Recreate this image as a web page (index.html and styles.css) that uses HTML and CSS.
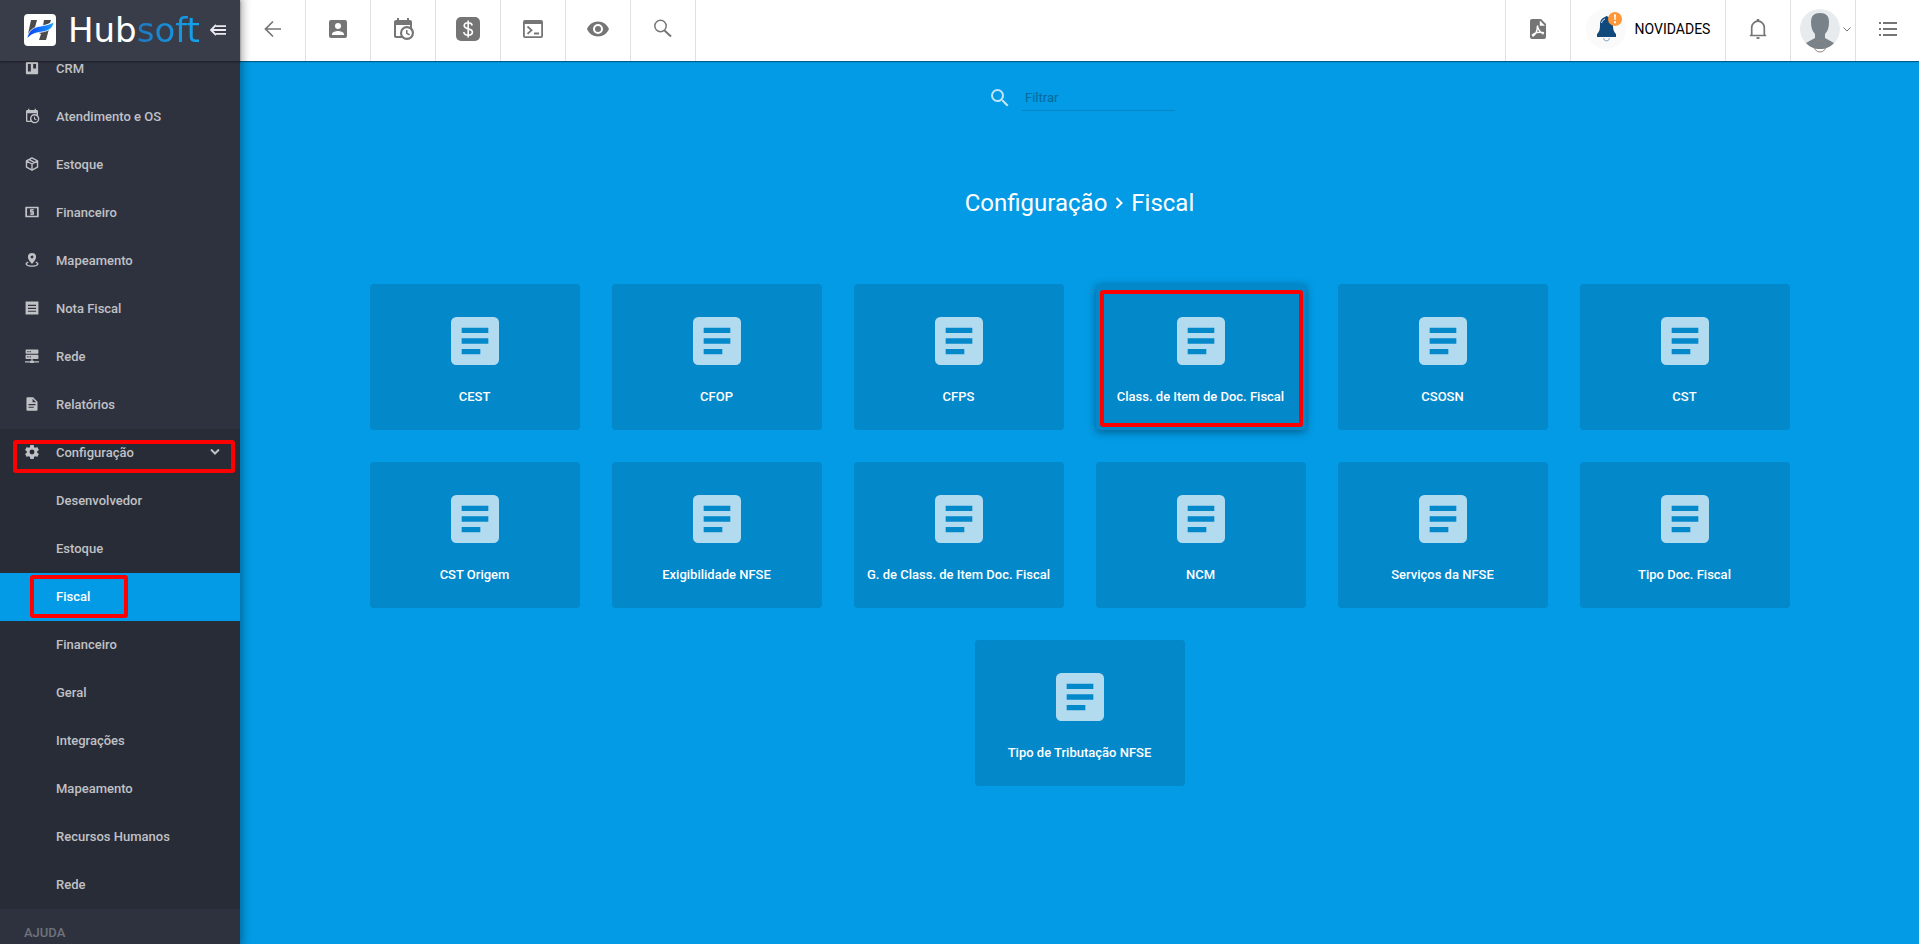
FILE: index.html
```html
<!DOCTYPE html>
<html lang="pt-BR">
<head>
<meta charset="utf-8">
<title>Hubsoft - Configuração Fiscal</title>
<link rel="stylesheet" href="styles.css">
</head>
<body>
<svg class="sprite" aria-hidden="true">
  <symbol id="doc" viewBox="0 0 24 24"><path d="M14 17H7v-2h7m3-2H7v-2h10m0-2H7V7h10m2-4H5a2 2 0 0 0-2 2v14a2 2 0 0 0 2 2h14a2 2 0 0 0 2-2V5a2 2 0 0 0-2-2z"/></symbol>
  <symbol id="calendar" viewBox="0 0 24 24"><path d="M15,13H16.5V15.82L18.94,17.23L18.19,18.53L15,16.69V13M19,8H5V19H9.67C9.24,18.09 9,17.07 9,16A7,7 0 0,1 16,9C17.07,9 18.09,9.24 19,9.67V8M5,21C3.89,21 3,20.1 3,19V5C3,3.89 3.89,3 5,3H6V1H8V3H16V1H18V3H19A2,2 0 0,1 21,5V11.1C22.24,12.36 23,14.09 23,16A7,7 0 0,1 16,23C14.09,23 12.36,22.24 11.1,21H5M16,11.15A4.85,4.85 0 0,0 11.15,16C11.15,18.68 13.32,20.85 16,20.85A4.85,4.85 0 0,0 20.85,16C20.85,13.32 18.68,11.15 16,11.15Z"/></symbol>
  <symbol id="magnify" viewBox="0 0 24 24"><path d="M9.5,3A6.5,6.5 0 0,1 16,9.5C16,11.11 15.41,12.59 14.44,13.73L14.71,14H15.5L20.5,19L19,20.5L14,15.5V14.71L13.73,14.44C12.59,15.41 11.11,16 9.5,16A6.5,6.5 0 0,1 3,9.5A6.5,6.5 0 0,1 9.5,3M9.5,5C7,5 5,7 5,9.5C5,12 7,14 9.5,14C12,14 14,12 14,9.5C14,7 12,5 9.5,5Z"/></symbol>
</svg>
<div class="app">
  <aside class="sidebar">
    <div class="brand">
      <svg class="brand-mark" viewBox="0 0 32 32" aria-hidden="true">
        <defs><linearGradient id="wing" x1="0" x2="1"><stop offset="0" stop-color="#0a3df5"/><stop offset="1" stop-color="#1aa0ff"/></linearGradient></defs>
        <rect width="32" height="32" rx="4" fill="#fff"/>
        <path d="M7 6h6l-3 11-6 3zM20 6h7l-1 3-7 3zM15 19l10-4-3 11h-7l2-6z" fill="#4b4b4b"/>
        <path d="M3 25C4 17 9 13 17 12C23 11 26 10 30 8C29 14 25 17 18 18C11 19 7 20 3 25z" fill="url(#wing)" stroke="#fff" stroke-width=".8"/>
      </svg>
      <span class="brand-name">Hub<span class="brand-accent">soft</span></span>
      <button class="fold" aria-label="Recolher menu"><svg viewBox="0 0 16 12" fill="none" stroke="currentColor" stroke-width="1.8"><path d="M6 1L1 6l5 5M1 6h15M6 2.200h10M6 9.800h10"/></svg></button>
    </div>
    <nav class="menu">
      <a class="item" href="#"><svg class="ico" viewBox="0 0 24 24"><path d="M3 1.500h18q1.500 0 1.500 1.500v18q0 1.500-1.500 1.500H3q-1.500 0-1.500-1.500V3q0-1.500 1.500-1.500zM5 5v13h5V5zM14 5v8h5V5z" fill-rule="evenodd"/></svg><span>CRM</span></a>
      <a class="item" href="#"><svg class="ico wide"><use href="#calendar"/></svg><span>Atendimento e OS</span></a>
      <a class="item" href="#"><svg class="ico" viewBox="0 0 24 24" fill="none" stroke="currentColor" stroke-width="2.400" stroke-linejoin="round"><path d="M12 1.500l9.500 5.200v10.600L12 22.500l-9.500-5.200V6.700zM3 7l9 5 9-5M12 12v10M7.500 4.500l9 5"/></svg><span>Estoque</span></a>
      <a class="item" href="#"><svg class="ico" viewBox="0 0 24 24"><path d="M1.500 3h21q1 0 1 1v16q0 1-1 1h-21q-1 0-1-1V4q0-1 1-1zM3.500 5.500v13h17v-13z" fill-rule="evenodd"/><path d="M15.500 8.200h-6v3.600h5v3.800h-6M12 6.500v11" fill="none" stroke="currentColor" stroke-width="2"/></svg><span>Financeiro</span></a>
      <a class="item" href="#"><svg class="ico" viewBox="0 0 24 24"><path d="M12 0a7 7 0 0 0-7 7c0 5 7 12 7 12s7-7 7-12a7 7 0 0 0-7-7zM12 4.500a2.500 2.500 0 1 1 0 5 2.500 2.500 0 0 1 0-5z" fill-rule="evenodd"/><path d="M5.500 15.500C-1 18 2 22.500 12 22.500s13-4.500 6.500-7" fill="none" stroke="currentColor" stroke-width="2.400"/></svg><span>Mapeamento</span></a>
      <a class="item" href="#"><svg class="ico" viewBox="0 0 24 24"><path d="M1 1h22v22H1zM5 6.500v2h14v-2zM5 11.500v2h14v-2zM5 16.500v2h14v-2z" fill-rule="evenodd"/></svg><span>Nota Fiscal</span></a>
      <a class="item" href="#"><svg class="ico" viewBox="0 0 24 24"><path d="M2 1h20q1 0 1 1v5q0 1-1 1H2q-1 0-1-1V2q0-1 1-1zM4 3.500v2h2v-2zM8 3.500v2h2v-2zM2 10h20q1 0 1 1v5q0 1-1 1H2q-1 0-1-1v-5q0-1 1-1zM4 12.500v2h2v-2zM8 12.500v2h2v-2zM11 17h2v3h2v1h9v2h-9v1H9v-1H0v-2h9v-1h2z" fill-rule="evenodd"/></svg><span>Rede</span></a>
      <a class="item" href="#"><svg class="ico" viewBox="0 0 24 24"><path d="M4 .5h10l7.500 7.500v14q0 1.500-1.500 1.500H4q-1.500 0-1.500-1.500V2Q2.500.5 4 .5zM13 3v6h6zM6 12v2h12v-2zM6 16.500v2h9v-2z" fill-rule="evenodd"/></svg><span>Relatórios</span></a>
      <div class="group">
        <a class="item parent" href="#"><svg class="ico" viewBox="2 2 20 20"><path d="M12,15.5A3.5,3.5 0 0,1 8.5,12A3.5,3.5 0 0,1 12,8.5A3.5,3.5 0 0,1 15.5,12A3.5,3.5 0 0,1 12,15.5M19.43,12.97C19.47,12.65 19.5,12.33 19.5,12C19.5,11.67 19.47,11.34 19.43,11L21.54,9.37C21.73,9.22 21.78,8.95 21.66,8.73L19.66,5.27C19.54,5.05 19.27,4.96 19.05,5.05L16.56,6.05C16.04,5.66 15.5,5.32 14.87,5.07L14.5,2.42C14.46,2.18 14.25,2 14,2H10C9.75,2 9.54,2.18 9.5,2.42L9.13,5.07C8.5,5.32 7.96,5.66 7.44,6.05L4.95,5.05C4.73,4.96 4.46,5.05 4.34,5.27L2.34,8.73C2.21,8.95 2.27,9.22 2.46,9.37L4.57,11C4.53,11.34 4.5,11.67 4.5,12C4.5,12.33 4.53,12.65 4.57,12.97L2.46,14.63C2.27,14.78 2.21,15.05 2.34,15.27L4.34,18.73C4.46,18.95 4.73,19.03 4.95,18.95L7.44,17.94C7.96,18.34 8.5,18.68 9.13,18.93L9.5,21.58C9.54,21.82 9.75,22 10,22H14C14.25,22 14.46,21.82 14.5,21.58L14.87,18.93C15.5,18.67 16.04,18.34 16.56,17.94L19.05,18.95C19.27,19.03 19.54,18.95 19.66,18.73L21.66,15.27C21.78,15.05 21.73,14.78 21.54,14.63L19.43,12.97Z"/></svg><span>Configuração</span><svg class="caret" viewBox="0 0 10 6" fill="none" stroke="currentColor" stroke-width="2"><path d="M1 .5l4 4 4-4"/></svg></a>
        <a class="item sub" href="#">Desenvolvedor</a>
        <a class="item sub" href="#">Estoque</a>
        <a class="item sub active" href="#" aria-current="page">Fiscal</a>
        <a class="item sub" href="#">Financeiro</a>
        <a class="item sub" href="#">Geral</a>
        <a class="item sub" href="#">Integrações</a>
        <a class="item sub" href="#">Mapeamento</a>
        <a class="item sub" href="#">Recursos Humanos</a>
        <a class="item sub" href="#">Rede</a>
      </div>
      <div class="heading">AJUDA</div>
    </nav>
  </aside>
  <div class="page">
    <header class="toolbar">
      <button class="tool" aria-label="Voltar"><svg viewBox="0 0 24 24" fill="none" stroke="currentColor" stroke-width="1.700"><path d="M20 12H5M12 4.500L4.500 12l7.500 7.500"/></svg></button>
      <button class="tool" aria-label="Clientes"><svg viewBox="0 0 24 24"><path d="M6,17C6,15 10,13.9 12,13.9C14,13.9 18,15 18,17V18H6M15,9A3,3 0 0,1 12,12A3,3 0 0,1 9,9A3,3 0 0,1 12,6A3,3 0 0,1 15,9M3,5V19A2,2 0 0,0 5,21H19A2,2 0 0,0 21,19V5A2,2 0 0,0 19,3H5C3.89,3 3,3.9 3,5Z"/></svg></button>
      <button class="tool" aria-label="Agenda"><svg><use href="#calendar"/></svg></button>
      <button class="tool" aria-label="Financeiro"><svg viewBox="0 0 24 24"><rect width="24" height="24" rx="5"/><path d="M16.200 8.500C15.800 6.800 14.300 5.800 12.200 5.800c-2.300 0-4 1.100-4 3 0 4 8.200 2.100 8.200 6.200 0 2-1.700 3.200-4.200 3.200-2.400 0-4.100-1.100-4.400-3.200M12.200 3.500v17" fill="none" stroke="#fff" stroke-width="1.600"/></svg></button>
      <button class="tool" aria-label="Terminal"><svg viewBox="0 0 24 24"><path d="M4 3h16a2 2 0 0 1 2 2v14a2 2 0 0 1-2 2H4a2 2 0 0 1-2-2V5a2 2 0 0 1 2-2zM3.800 7v12.200h16.400V7z" fill-rule="evenodd"/><path d="M6.500 9.500l4 3.700-4 3.700" fill="none" stroke="currentColor" stroke-width="1.800"/><path d="M13 15.500h5v2h-5z"/></svg></button>
      <button class="tool" aria-label="Visualizar"><svg viewBox="0 0 24 24"><path d="M12,9A3,3 0 0,0 9,12A3,3 0 0,0 12,15A3,3 0 0,0 15,12A3,3 0 0,0 12,9M12,17A5,5 0 0,1 7,12A5,5 0 0,1 12,7A5,5 0 0,1 17,12A5,5 0 0,1 12,17M12,4.500C7,4.500 2.730,7.610 1,12C2.730,16.390 7,19.500 12,19.500C17,19.500 21.270,16.390 23,12C21.270,7.610 17,4.500 12,4.500Z"/></svg></button>
      <button class="tool" aria-label="Buscar"><svg viewBox="0 0 24 24" fill="none" stroke="currentColor"><circle cx="9.500" cy="9" r="5.700" stroke-width="1.500"/><path d="M13.500 13.500l6.500 6" stroke-width="2"/></svg></button>
      <div class="spacer"></div>
      <button class="tool end" aria-label="PDF"><svg viewBox="0 0 24 24"><path d="M6 2h9l5 5v13a2 2 0 0 1-2 2H6a2 2 0 0 1-2-2V4q0-2 2-2z"/><path d="M13.800 3.500L19 8.700h-5.200z" fill="#fff"/><path d="M11.500 8.500C11.500 13 9.500 17.500 6.500 19.500M6 18.500c2.500-3 7-4 12-2.800M11.500 9c.5 3.500 2.500 6 6 8" fill="none" stroke="#fff" stroke-width="1.500"/></svg></button>
      <button class="tool end news"><svg class="news-bell" viewBox="0 0 40 40" aria-hidden="true"><circle cx="20" cy="20" r="20" fill="#fafafa"/><path d="M19 8q2-2 3 0c4 1 5 4 5 8 0 5 1 7 3 9v3H11v-3c2-2 3-4 3-9 0-5 2-7 5-8z" fill="#104a7d"/><path d="M15.500 14q.5-3 3.500-4" fill="none" stroke="#dceaf5"/><path d="M17.500 29q.5 3 3 3t3-3" fill="none" stroke="#7ea3c5"/><circle cx="29" cy="10" r="7" fill="#ff9736"/><path d="M28 5.500h2l-.4 5.500h-1.200zM28 12.300h2v2h-2z" fill="#fff"/></svg><span>NOVIDADES</span></button>
      <button class="tool end" aria-label="Notificações"><svg viewBox="0 0 24 24" fill="none" stroke="currentColor" stroke-width="1.700"><path d="M3.800 18.500h16.400M5.700 18V10.500a6.300 6.300 0 0 1 12.600 0V18"/><path d="M12 2v3" stroke-width="2.500"/><path d="M10.500 21h3" stroke-width="1.800"/></svg></button>
      <button class="tool end user" aria-label="Usuário"><svg class="avatar" viewBox="0 0 40 40"><circle cx="20" cy="20" r="20" fill="#e8ebee"/><path d="M20 4c6 0 9 3 9 9 0 5-1 9-4 12v4c3 2 6 3 9 5-4 4-8 6-14 6s-10-2-14-6c3-2 6-3 9-5v-4c-3-3-4-7-4-12 0-6 3-9 9-9z" fill="#7a8289"/><circle cx="20" cy="37" r="6" fill="none" stroke="#8b8581"/></svg><svg class="arrow" viewBox="0 0 8 5" fill="none" stroke="currentColor"><path d="M.5.500L4 4 7.500.5"/></svg></button>
      <button class="tool end" aria-label="Menu rápido"><svg viewBox="0 0 24 24"><path d="M7 5h14v2H7zM7 11h14v2H7zM7 17h14v2H7zM3 5h2v2H3zM3 11h2v2H3zM3 17h2v2H3z"/></svg></button>
    </header>
    <main class="content">
      <div class="filter">
        <label for="filtrar" aria-label="Filtrar"><svg viewBox="0 0 24 24"><use href="#magnify"/></svg></label>
        <input id="filtrar" type="text" placeholder="Filtrar">
      </div>
      <h1 class="title">Configuração <svg viewBox="0 0 8 12" fill="none" stroke="currentColor" stroke-width="2"><path d="M1.500 1L6.500 6l-5 5"/></svg> Fiscal</h1>
      <div class="cards">
        <a class="card" href="#"><svg><use href="#doc"/></svg>CEST</a>
        <a class="card" href="#"><svg><use href="#doc"/></svg>CFOP</a>
        <a class="card" href="#"><svg><use href="#doc"/></svg>CFPS</a>
        <a class="card marked" href="#"><svg><use href="#doc"/></svg>Class. de Item de Doc. Fiscal</a>
        <a class="card" href="#"><svg><use href="#doc"/></svg>CSOSN</a>
        <a class="card" href="#"><svg><use href="#doc"/></svg>CST</a>
        <a class="card" href="#"><svg><use href="#doc"/></svg>CST Origem</a>
        <a class="card" href="#"><svg><use href="#doc"/></svg>Exigibilidade NFSE</a>
        <a class="card" href="#"><svg><use href="#doc"/></svg>G. de Class. de Item Doc. Fiscal</a>
        <a class="card" href="#"><svg><use href="#doc"/></svg>NCM</a>
        <a class="card" href="#"><svg><use href="#doc"/></svg>Serviços da NFSE</a>
        <a class="card" href="#"><svg><use href="#doc"/></svg>Tipo Doc. Fiscal</a>
        <a class="card" href="#"><svg><use href="#doc"/></svg>Tipo de Tributação NFSE</a>
      </div>
    </main>
  </div>
</div>
</body>
</html>
```
FILE: styles.css
```css
* { box-sizing: border-box; }
body { margin: 0; font-family: Roboto, "Liberation Sans", sans-serif; font-size: 13px; overflow: hidden; }
a { color: inherit; text-decoration: none; }
button { border: 0; padding: 0; background: none; font: inherit; color: inherit; }
svg { fill: currentColor; flex: none; }
svg[fill="none"] { fill: none; }
.sprite { position: absolute; width: 0; height: 0; }
.app { display: flex; height: 100vh; }

.sidebar { width: 240px; flex: none; display: flex; flex-direction: column; background: #2e323f; color: #c0c1c5; z-index: 2; box-shadow: 0 0 8px 3px rgba(0, 0, 0, .3); }
.brand { height: 61px; flex: none; display: flex; align-items: center; padding: 0 12px 2px 24px; background: #393d4a; box-shadow: 0 1px 2px rgba(0, 0, 0, .45); z-index: 1; }
.brand-mark { width: 32px; height: 32px; }
.brand-name { width: 136px; margin-left: 12px; font: 34px/32px "DejaVu Sans", sans-serif; color: #fff; }
.brand-accent { color: transparent; background: linear-gradient(90deg, #1d78c0, #12a5ee); background-clip: text; }
.fold { display: flex; margin-left: 6px; color: #eceaf0; }
.fold svg { width: 16px; height: 12px; }

.menu { flex: 1; min-height: 0; overflow: hidden; margin-top: -16px; font-weight: 500; }
.item { display: flex; align-items: center; height: 48px; padding: 0 20px 2px 24px; gap: 16px; position: relative; }
.ico { width: 16px; height: 16px; padding: 1px; overflow: visible; }
.wide { padding: 0; }
.group { background: #282c37; }
.sub { padding-left: 56px; }
.active { background: #039be5; color: #fff; }
.caret { width: 10px; height: 6px; margin-left: auto; }
.heading { height: 48px; padding: 0 24px; line-height: 48px; color: #6f727b; }
.parent::after, .active::after, .marked::after { content: ""; position: absolute; border: 4px solid #f00; border-radius: 3px; }
.parent::after { inset: 11px 5px 4px 13px; }
.active::after { inset: 2px 112px 3px 30px; }

.page { flex: 1; min-width: 0; display: flex; flex-direction: column; }
.toolbar { height: 61px; flex: none; display: flex; background: #fff; color: #757575; box-shadow: 0 1px 1px rgba(0, 0, 0, .4); z-index: 1; }
.tool { width: 65px; display: flex; align-items: center; justify-content: center; padding-top: 0; padding-bottom: 3px; border-right: 1px solid #e0e0e0; }
.tool:first-child { width: 66px; }
.tool svg { width: 24px; height: 24px; }
.spacer { flex: 1; }
.end { border-right: 0; border-left: 1px solid #e0e0e0; }
.end:last-child { width: 64px; }
.news { width: 155px; gap: 9px; color: #000; font-size: 14px; font-weight: 400; }
.tool .news-bell { width: 40px; height: 40px; }
.user { gap: 3px; padding-left: 4px; }
.tool .avatar { width: 40px; height: 40px; overflow: visible; }
.tool .arrow { width: 8px; height: 5px; }

.content { flex: 1; display: flex; flex-direction: column; align-items: center; background: #039be5; color: #fff; }
.filter { display: flex; align-items: center; gap: 10px; margin-top: 24px; padding-left: 4px; }
.filter label { display: flex; color: rgba(255, 255, 255, .75); }
.filter svg { width: 24px; height: 24px; }
.filter input { width: 153px; height: 26px; padding: 0 3px; border: 0; border-bottom: 1px solid #0485c5; background: none; font: inherit; color: #fff; outline: 0; }
.filter input::placeholder { color: #04699b; opacity: 1; }
.title { display: flex; align-items: center; gap: 8px; margin: 76px 0 0; font-size: 24px; line-height: 32px; font-weight: 400; }
.title svg { width: 8px; height: 12px; }
.cards { display: flex; flex-wrap: wrap; justify-content: center; gap: 32px; margin-top: 65px; padding: 0 96px; max-width: 1612px; }
.card { width: 210px; display: flex; flex-direction: column; align-items: center; gap: 14px; padding: 25px 0 23px; border-radius: 4px; background: #0388ca; line-height: 20px; font-weight: 500; position: relative; }
.card svg { width: 64px; height: 64px; color: rgba(255, 255, 255, .7); }
.marked { box-shadow: 0 2px 8px rgba(0, 0, 0, .4); }
.marked::after { inset: 6px 3px 3px 4px; }
```
